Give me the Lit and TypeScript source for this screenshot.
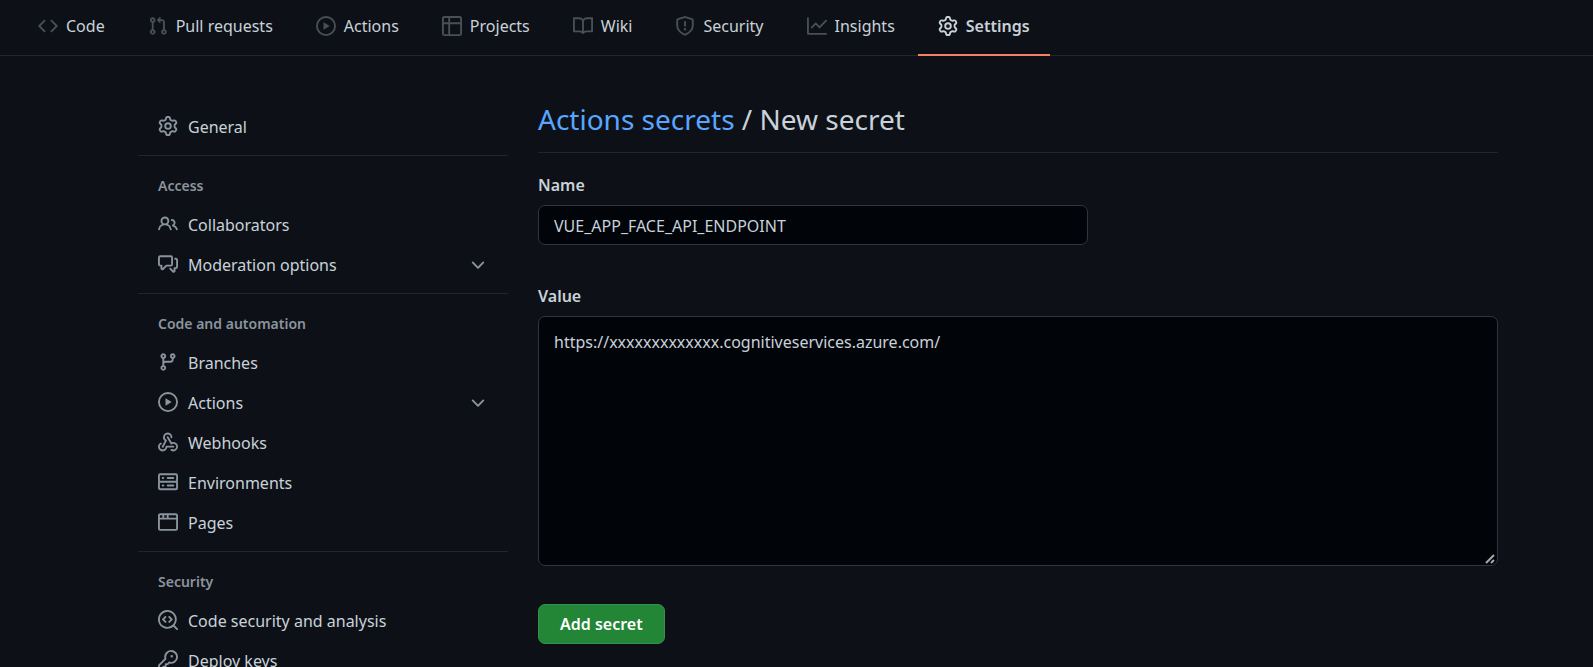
import { LitElement, html, css, svg, nothing } from "lit";
import { customElement, property } from "lit/decorators.js";

const ICONS: Record<string, string> = {
  code: "M4.72 3.22a.75.75 0 011.06 1.06L2.06 8l3.72 3.72a.75.75 0 11-1.06 1.06L.47 8.53a.75.75 0 010-1.06l4.25-4.25zm6.56 0a.75.75 0 10-1.06 1.06L13.94 8l-3.72 3.72a.75.75 0 101.06 1.06l4.25-4.25a.75.75 0 000-1.06l-4.25-4.25z",
  pull: "M7.177 3.073L9.573.677A.25.25 0 0110 .854v4.792a.25.25 0 01-.427.177L7.177 3.427a.25.25 0 010-.354zM3.75 2.5a.75.75 0 100 1.5.75.75 0 000-1.5zm-2.25.75a2.25 2.25 0 113 2.122v5.256a2.251 2.251 0 11-1.5 0V5.372A2.25 2.25 0 011.5 3.25zM11 2.5h-1V4h1a1 1 0 011 1v5.628a2.251 2.251 0 101.5 0V5A2.5 2.5 0 0011 2.5zm1 10.25a.75.75 0 111.5 0 .75.75 0 01-1.5 0zM3.75 12a.75.75 0 100 1.5.75.75 0 000-1.5z",
  play: "M1.5 8a6.5 6.5 0 1113 0 6.5 6.5 0 01-13 0zM8 0a8 8 0 100 16A8 8 0 008 0zM6.379 5.227A.25.25 0 006 5.442v5.117a.25.25 0 00.379.214l4.264-2.559a.25.25 0 000-.428L6.379 5.227z",
  table: "M0 1.75C0 .784.784 0 1.75 0h12.5C15.216 0 16 .784 16 1.75v12.5A1.75 1.75 0 0114.25 16H1.75A1.75 1.75 0 010 14.25V1.75zM1.5 6.5v7.75c0 .138.112.25.25.25H5v-8H1.5zM5 5H1.5V1.75a.25.25 0 01.25-.25H5V5zm1.5 1.5v8h7.75a.25.25 0 00.25-.25V6.5h-8zm8-1.5h-8V1.5h7.75a.25.25 0 01.25.25V5z",
  book: "M0 1.75A.75.75 0 01.75 1h4.253c1.227 0 2.317.59 3 1.501A3.744 3.744 0 0111.006 1h4.245a.75.75 0 01.75.75v10.5a.75.75 0 01-.75.75h-4.507a2.25 2.25 0 00-1.591.659l-.622.621a.75.75 0 01-1.06 0l-.622-.621A2.25 2.25 0 005.258 13H.75a.75.75 0 01-.75-.75V1.75zm8.755 3a2.25 2.25 0 012.25-2.25H14.5v9h-3.757c-.71 0-1.4.201-1.992.572l.004-7.322zm-1.504 7.324l.004-5.073-.002-2.253A2.25 2.25 0 005.003 2.5H1.5v9h3.757a3.75 3.75 0 011.994.574z",
  shield: "M7.467.133a1.75 1.75 0 011.066 0l5.25 1.68A1.75 1.75 0 0115 3.48V7c0 1.566-.32 3.182-1.303 4.682-.983 1.498-2.585 2.813-5.032 3.855a1.7 1.7 0 01-1.33 0c-2.447-1.042-4.049-2.357-5.032-3.855C1.32 10.182 1 8.566 1 7V3.48a1.75 1.75 0 011.217-1.667l5.25-1.68zm.61 1.429a.25.25 0 00-.153 0l-5.25 1.68a.25.25 0 00-.174.238V7c0 1.358.275 2.666 1.057 3.86.784 1.194 2.121 2.34 4.366 3.297a.2.2 0 00.154 0c2.245-.956 3.582-2.104 4.366-3.298C13.225 9.666 13.5 8.36 13.5 7V3.48a.25.25 0 00-.174-.237l-5.25-1.68zM8.75 4.75a.75.75 0 00-1.5 0v3a.75.75 0 001.5 0v-3zM9 10.5a1 1 0 11-2 0 1 1 0 012 0z",
  graph: "M1.5 1.75a.75.75 0 00-1.5 0v12.5c0 .414.336.75.75.75h14.5a.75.75 0 000-1.5H1.5V1.75zm14.28 2.53a.75.75 0 00-1.06-1.06L10 7.94 7.53 5.47a.75.75 0 00-1.06 0L3.22 8.72a.75.75 0 001.06 1.06L7 7.06l2.47 2.47a.75.75 0 001.06 0l5.25-5.25z",
  gear: "M7.429 1.525a6.593 6.593 0 011.142 0c.036.003.108.036.137.146l.289 1.105c.147.56.55.967.997 1.189.174.086.341.183.501.29.417.278.97.423 1.53.27l1.102-.303c.11-.03.175.016.195.046.219.31.41.641.573.989.014.031.022.11-.059.19l-.815.806c-.411.406-.562.957-.53 1.456a4.588 4.588 0 010 .582c-.032.499.119 1.05.53 1.456l.815.806c.08.08.073.159.059.19a6.494 6.494 0 01-.573.99c-.02.029-.086.074-.195.045l-1.103-.303c-.559-.153-1.112-.008-1.529.27-.16.107-.327.204-.5.29-.449.222-.851.628-.998 1.189l-.289 1.105c-.029.11-.101.143-.137.146a6.613 6.613 0 01-1.142 0c-.036-.003-.108-.037-.137-.146l-.289-1.105c-.147-.56-.55-.967-.997-1.189a4.502 4.502 0 01-.501-.29c-.417-.278-.97-.423-1.53-.27l-1.102.303c-.11.03-.175-.016-.195-.046a6.492 6.492 0 01-.573-.989c-.014-.031-.022-.11.059-.19l.815-.806c.411-.406.562-.957.53-1.456a4.587 4.587 0 010-.582c.032-.499-.119-1.05-.53-1.456l-.815-.806c-.08-.08-.073-.159-.059-.19a6.44 6.44 0 01.573-.99c.02-.029.086-.075.195-.045l1.103.303c.559.153 1.112.008 1.529-.27.16-.107.327-.204.5-.29.449-.222.851-.628.998-1.189l.289-1.105c.029-.11.101-.143.137-.146zM8 0c-.236 0-.47.01-.701.03-.743.065-1.29.615-1.458 1.261l-.29 1.106c-.017.066-.078.158-.211.224a5.994 5.994 0 00-.668.386c-.123.082-.233.09-.3.071L3.27 2.776c-.644-.177-1.392.02-1.82.63a7.977 7.977 0 00-.704 1.217c-.315.675-.111 1.422.363 1.891l.815.806c.05.048.098.147.088.294a6.084 6.084 0 000 .772c.01.147-.038.246-.088.294l-.815.806c-.474.469-.678 1.216-.363 1.891.2.428.436.835.704 1.218.428.609 1.176.806 1.82.63l1.103-.303c.066-.019.176-.011.299.071.213.143.436.272.668.386.133.066.194.158.212.224l.289 1.106c.169.646.715 1.196 1.458 1.26a8.094 8.094 0 001.402 0c.743-.064 1.29-.614 1.458-1.26l.29-1.106c.017-.066.078-.158.211-.224a5.98 5.98 0 00.668-.386c.123-.082.233-.09.3-.071l1.102.302c.644.177 1.392-.02 1.82-.63.268-.382.505-.789.704-1.217.315-.675.111-1.422-.364-1.891l-.814-.806c-.05-.048-.098-.147-.088-.294a6.1 6.1 0 000-.772c-.01-.147.039-.246.088-.294l.814-.806c.475-.469.679-1.216.364-1.891a7.992 7.992 0 00-.704-1.218c-.428-.609-1.176-.806-1.82-.63l-1.103.303c-.066.019-.176.011-.299-.071a5.991 5.991 0 00-.668-.386c-.133-.066-.194-.158-.212-.224L10.16 1.29C9.99.645 9.444.095 8.701.031A8.094 8.094 0 008 0zm1.5 8a1.5 1.5 0 11-3 0 1.5 1.5 0 013 0zM11 8a3 3 0 11-6 0 3 3 0 016 0z",
  people: "M5.5 3.5a2 2 0 100 4 2 2 0 000-4zM2 5.5a3.5 3.5 0 115.898 2.549 5.507 5.507 0 013.034 4.084.75.75 0 11-1.482.235 4.001 4.001 0 00-7.9 0 .75.75 0 01-1.482-.236A5.507 5.507 0 013.102 8.05 3.49 3.49 0 012 5.5zM11 4a.75.75 0 100 1.5 1.5 1.5 0 01.666 2.844.75.75 0 00-.416.672v.352a.75.75 0 00.574.73c1.2.289 2.162 1.2 2.522 2.372a.75.75 0 101.434-.44 5.01 5.01 0 00-2.56-3.012A3 3 0 0011 4z",
  discussion: "M1.5 2.75a.25.25 0 01.25-.25h8.5a.25.25 0 01.25.25v5.5a.25.25 0 01-.25.25h-3.5a.75.75 0 00-.53.22L3.5 11.44V9.25a.75.75 0 00-.75-.75h-1a.25.25 0 01-.25-.25v-5.5zM1.75 1A1.75 1.75 0 000 2.75v5.5C0 9.216.784 10 1.75 10H2v1.543a1.457 1.457 0 002.487 1.03L7.061 10h3.189A1.75 1.75 0 0012 8.25v-5.5A1.75 1.75 0 0010.25 1h-8.5zM14.5 4.75a.25.25 0 00-.25-.25h-.5a.75.75 0 110-1.5h.5c.966 0 1.75.784 1.75 1.75v5.5A1.75 1.75 0 0114.25 12H14v1.543a1.457 1.457 0 01-2.487 1.03L9.22 12.28a.75.75 0 111.06-1.06l2.22 2.22v-2.19a.75.75 0 01.75-.75h1a.25.25 0 00.25-.25v-5.5z",
  branch: "M11.75 2.5a.75.75 0 100 1.5.75.75 0 000-1.5zm-2.25.75a2.25 2.25 0 113 2.122V6A2.5 2.5 0 0110 8.5H6a1 1 0 00-1 1v1.128a2.251 2.251 0 11-1.5 0V5.372a2.25 2.25 0 111.5 0v1.836A2.492 2.492 0 016 7h4a1 1 0 001-1v-.628A2.25 2.25 0 019.5 3.25zM4.25 12a.75.75 0 100 1.5.75.75 0 000-1.5zM3.5 3.25a.75.75 0 111.5 0 .75.75 0 01-1.5 0z",
  webhook: "M5.5 4.25a2.25 2.25 0 014.5 0 .75.75 0 001.5 0 3.75 3.75 0 10-6.14 2.889l-2.272 4.258a.75.75 0 001.324.706L7 7.25a.75.75 0 00-.309-1.015A2.25 2.25 0 015.5 4.25zM7.364 3.607a.75.75 0 011.03.257l2.608 4.349a3.75 3.75 0 11-.628 6.785.75.75 0 01.752-1.299 2.25 2.25 0 10-.033-3.88.75.75 0 01-1.03-.256L7.107 4.636a.75.75 0 01.257-1.03zM2.9 8.776A.75.75 0 012.625 9.8 2.25 2.25 0 106 11.75a.75.75 0 01.75-.751h5.5a.75.75 0 010 1.5H7.425a3.751 3.751 0 11-5.55-3.998.75.75 0 011.024.274z",
  server: "M1.75 1A1.75 1.75 0 000 2.75v4c0 .372.116.717.314 1a1.742 1.742 0 00-.314 1v4c0 .966.784 1.75 1.75 1.75h12.5A1.75 1.75 0 0016 12.75v-4c0-.372-.116-.717-.314-1 .198-.283.314-.628.314-1v-4A1.75 1.75 0 0014.25 1H1.75zm0 7.5a.25.25 0 00-.25.25v4c0 .138.112.25.25.25h12.5a.25.25 0 00.25-.25v-4a.25.25 0 00-.25-.25H1.75zM1.5 2.75a.25.25 0 01.25-.25h12.5a.25.25 0 01.25.25v4a.25.25 0 01-.25.25H1.75a.25.25 0 01-.25-.25v-4zm5.5 2A.75.75 0 017.75 4h4.5a.75.75 0 010 1.5h-4.5A.75.75 0 017 4.75zM7.75 10a.75.75 0 000 1.5h4.5a.75.75 0 000-1.5h-4.5zM3 4.75A.75.75 0 013.75 4h.5a.75.75 0 010 1.5h-.5A.75.75 0 013 4.75zM3.75 10a.75.75 0 000 1.5h.5a.75.75 0 000-1.5h-.5z",
  browser: "M0 2.75C0 1.784.784 1 1.75 1h12.5c.966 0 1.75.784 1.75 1.75v10.5A1.75 1.75 0 0114.25 15H1.75A1.75 1.75 0 010 13.25V2.75zm1.75-.25a.25.25 0 00-.25.25V4.5h2v-2H1.75zM5 2.5v2h2v-2H5zm3.5 0v2h6V2.75a.25.25 0 00-.25-.25H8.5zm6 3.5h-13v7.25c0 .138.112.25.25.25h12.5a.25.25 0 00.25-.25V6z",
  codescan: "M8.47 4.97a.75.75 0 000 1.06L9.94 7.5 8.47 8.97a.75.75 0 101.06 1.06l2-2a.75.75 0 000-1.06l-2-2a.75.75 0 00-1.06 0zM6.53 6.03a.75.75 0 00-1.06-1.06l-2 2a.75.75 0 000 1.06l2 2a.75.75 0 101.06-1.06L5.06 7.5l1.47-1.47zM12.246 13.307a7.5 7.5 0 111.06-1.06l2.474 2.473a.75.75 0 11-1.06 1.06l-2.474-2.473zM1.5 7.5a6 6 0 1110.386 4.094.75.75 0 00-.292.293A6 6 0 011.5 7.5z",
  key: "M6.5 5.5a4 4 0 112.731 3.795.75.75 0 00-.768.18L7.44 10.5H6.25a.75.75 0 00-.75.75v1.19l-.06.06H4.25a.75.75 0 00-.75.75v1.19l-.06.06H1.75a.25.25 0 01-.25-.25v-1.69l5.024-5.023a.75.75 0 00.181-.768A3.995 3.995 0 016.5 5.5zm4-5.5a5.5 5.5 0 00-5.348 6.788L.22 11.72a.75.75 0 00-.22.53v2C0 15.216.784 16 1.75 16h2a.75.75 0 00.53-.22l.5-.5a.75.75 0 00.22-.53V14h.75a.75.75 0 00.53-.22l.5-.5a.75.75 0 00.22-.53V12h.75a.75.75 0 00.53-.22l.932-.932A5.5 5.5 0 1010.5 0zm.5 6a1 1 0 100-2 1 1 0 000 2z",
  chevron: "M12.78 6.22a.75.75 0 010 1.06l-4.25 4.25a.75.75 0 01-1.06 0L3.22 7.28a.75.75 0 011.06-1.06L8 9.94l3.72-3.72a.75.75 0 011.06 0z",
};

@customElement("line-icon")
class LineIcon extends LitElement {
  @property() name = "";

  static styles = css`
    :host {
      display: block;
      flex: none;
      width: 20px;
      height: 20px;
    }
    .glyph {
      display: block;
      width: 100%;
      height: 100%;
      fill: currentColor;
      fill-rule: evenodd;
    }
  `;

  render() {
    return html`<svg class="glyph" viewBox="0 0 16 16" aria-hidden="true">
      ${svg`<path d=${ICONS[this.name] ?? ""}></path>`}
    </svg>`;
  }
}

interface Entry {
  label: string;
  icon: string;
  expands?: boolean;
}

interface Group {
  title?: string;
  entries: Entry[];
}

const TABS: Entry[] = [
  { label: "Code", icon: "code" },
  { label: "Pull requests", icon: "pull" },
  { label: "Actions", icon: "play" },
  { label: "Projects", icon: "table" },
  { label: "Wiki", icon: "book" },
  { label: "Security", icon: "shield" },
  { label: "Insights", icon: "graph" },
  { label: "Settings", icon: "gear" },
];

const GROUPS: Group[] = [
  { entries: [{ label: "General", icon: "gear" }] },
  {
    title: "Access",
    entries: [
      { label: "Collaborators", icon: "people" },
      { label: "Moderation options", icon: "discussion", expands: true },
    ],
  },
  {
    title: "Code and automation",
    entries: [
      { label: "Branches", icon: "branch" },
      { label: "Actions", icon: "play", expands: true },
      { label: "Webhooks", icon: "webhook" },
      { label: "Environments", icon: "server" },
      { label: "Pages", icon: "browser" },
    ],
  },
  {
    title: "Security",
    entries: [
      { label: "Code security and analysis", icon: "codescan" },
      { label: "Deploy keys", icon: "key" },
    ],
  },
];

@customElement("repo-tabs")
class RepoTabs extends LitElement {
  static styles = css`
    :host {
      display: block;
    }
    .tabs {
      display: flex;
      gap: 3px;
      padding: 0 18px;
      border-bottom: 1px solid #21262d;
    }
    .tab {
      display: flex;
      align-items: center;
      gap: 8px;
      height: 52px;
      margin-bottom: -1px;
      padding: 0 20px 2px;
      border-bottom: 2px solid transparent;
      color: #c9d1d9;
      text-decoration: none;
      white-space: nowrap;
    }
    .tab line-icon {
      color: #484f58;
    }
    .tab.current {
      border-bottom-color: #f78166;
      font-weight: 600;
    }
    .tab.current line-icon {
      color: #c9d1d9;
    }
  `;

  render() {
    return html`<nav class="tabs" aria-label="Repository">
      ${TABS.map(
        (tab) => html`<a
          class=${tab.label === "Settings" ? "tab current" : "tab"}
          href="#"
          aria-current=${tab.label === "Settings" ? "page" : nothing}
          ><line-icon name=${tab.icon}></line-icon><span>${tab.label}</span></a
        >`
      )}
    </nav>`;
  }
}

@customElement("settings-menu")
class SettingsMenu extends LitElement {
  static styles = css`
    :host {
      display: block;
    }
    .group {
      margin: 0;
      padding: 0 0 8px;
      list-style: none;
    }
    .section + .section {
      border-top: 1px solid #21262d;
    }
    .title {
      margin: 0;
      padding: 20px 20px 10px;
      color: #8b949e;
      font-size: 14px;
      font-weight: 600;
      line-height: 19px;
    }
    .item {
      box-sizing: border-box;
      display: flex;
      align-items: center;
      gap: 10px;
      width: 100%;
      height: 40px;
      padding: 0 20px;
      border: 0;
      background: none;
      color: #c9d1d9;
      font: inherit;
      text-align: left;
      text-decoration: none;
      cursor: pointer;
    }
    .item line-icon {
      color: #8b949e;
    }
    .lead {
      padding-bottom: 2px;
    }
    .label {
      flex: 1;
    }
  `;

  private entry(e: Entry) {
    const body = html`<line-icon class="lead" name=${e.icon}></line-icon
      ><span class="label">${e.label}</span>`;
    return html`<li>
      ${e.expands
        ? html`<button class="item" type="button" aria-expanded="false">
            ${body}<line-icon class="lead" name="chevron"></line-icon>
          </button>`
        : html`<a class="item" href="#">${body}</a>`}
    </li>`;
  }

  render() {
    return html`<nav aria-label="Settings">
      ${GROUPS.map(
        (g) => html`<section class="section">
          ${g.title ? html`<h3 class="title">${g.title}</h3>` : nothing}
          <ul class="group">
            ${g.entries.map((e) => this.entry(e))}
          </ul>
        </section>`
      )}
    </nav>`;
  }
}

@customElement("secret-form")
class SecretForm extends LitElement {
  static styles = css`
    :host {
      display: block;
      min-width: 0;
    }
    .heading {
      margin: 0 0 20px;
      padding-bottom: 14px;
      border-bottom: 1px solid #21262d;
      font-size: 28px;
      font-weight: 400;
      line-height: 38px;
    }
    .link {
      color: #58a6ff;
      text-decoration: none;
    }
    .form {
      display: flex;
      flex-direction: column;
      align-items: flex-start;
    }
    .label {
      margin-bottom: 7px;
      font-weight: 600;
      line-height: 25px;
    }
    .field {
      box-sizing: border-box;
      border: 1px solid #30363d;
      border-radius: 7px;
      background: #010409;
      color: #c9d1d9;
      font: inherit;
      outline: none;
    }
    .name {
      width: 550px;
      max-width: 100%;
      height: 40px;
      margin-bottom: 39px;
      padding: 2px 15px 0;
    }
    .value {
      width: 100%;
      height: 250px;
      margin-bottom: 38px;
      padding: 12px 15px;
      resize: vertical;
    }
    .value::-webkit-resizer {
      background: url("data:image/svg+xml,%3Csvg xmlns='http://www.w3.org/2000/svg' width='15' height='15'%3E%3Cpath d='M4 13l8-8M9 13l3-3' stroke='%23a8a8a8' stroke-width='2' fill='none'/%3E%3C/svg%3E")
        no-repeat;
    }
    .submit {
      height: 40px;
      padding: 0 21px;
      border: 1px solid #36924a;
      border-radius: 7px;
      background: #238636;
      color: #ffffff;
      font: inherit;
      font-weight: 600;
      cursor: pointer;
    }
  `;

  render() {
    return html`
      <h2 class="heading">
        <a class="link" href="#">Actions secrets</a> / New secret
      </h2>
      <form class="form" @submit=${(e: Event) => e.preventDefault()}>
        <label class="label" for="secret-name">Name</label>
        <input
          class="field name"
          id="secret-name"
          type="text"
          spellcheck="false"
          .value=${"VUE_APP_FACE_API_ENDPOINT"}
        />
        <label class="label" for="secret-value">Value</label>
        <textarea
          class="field value"
          id="secret-value"
          spellcheck="false"
          .value=${"https://xxxxxxxxxxxxx.cognitiveservices.azure.com/"}
        ></textarea>
        <button class="submit" type="submit">Add secret</button>
      </form>
    `;
  }
}

@customElement("app-root")
class AppRoot extends LitElement {
  static styles = css`
    :host {
      display: block;
      box-sizing: border-box;
      height: 100vh;
      overflow: hidden;
      background: #0d1117;
      color: #c9d1d9;
      color-scheme: dark;
      font-family: "Noto Sans", "Open Sans", sans-serif;
      font-size: 16px;
      line-height: 26px;
    }
    .page {
      display: grid;
      grid-template-columns: 370px minmax(0, 1fr);
      gap: 30px;
      padding: 44px 95px 0 138px;
    }
    .menu {
      padding-top: 7px;
    }
  `;

  render() {
    return html`
      <repo-tabs></repo-tabs>
      <main class="page">
        <settings-menu class="menu"></settings-menu>
        <secret-form></secret-form>
      </main>
    `;
  }
}
